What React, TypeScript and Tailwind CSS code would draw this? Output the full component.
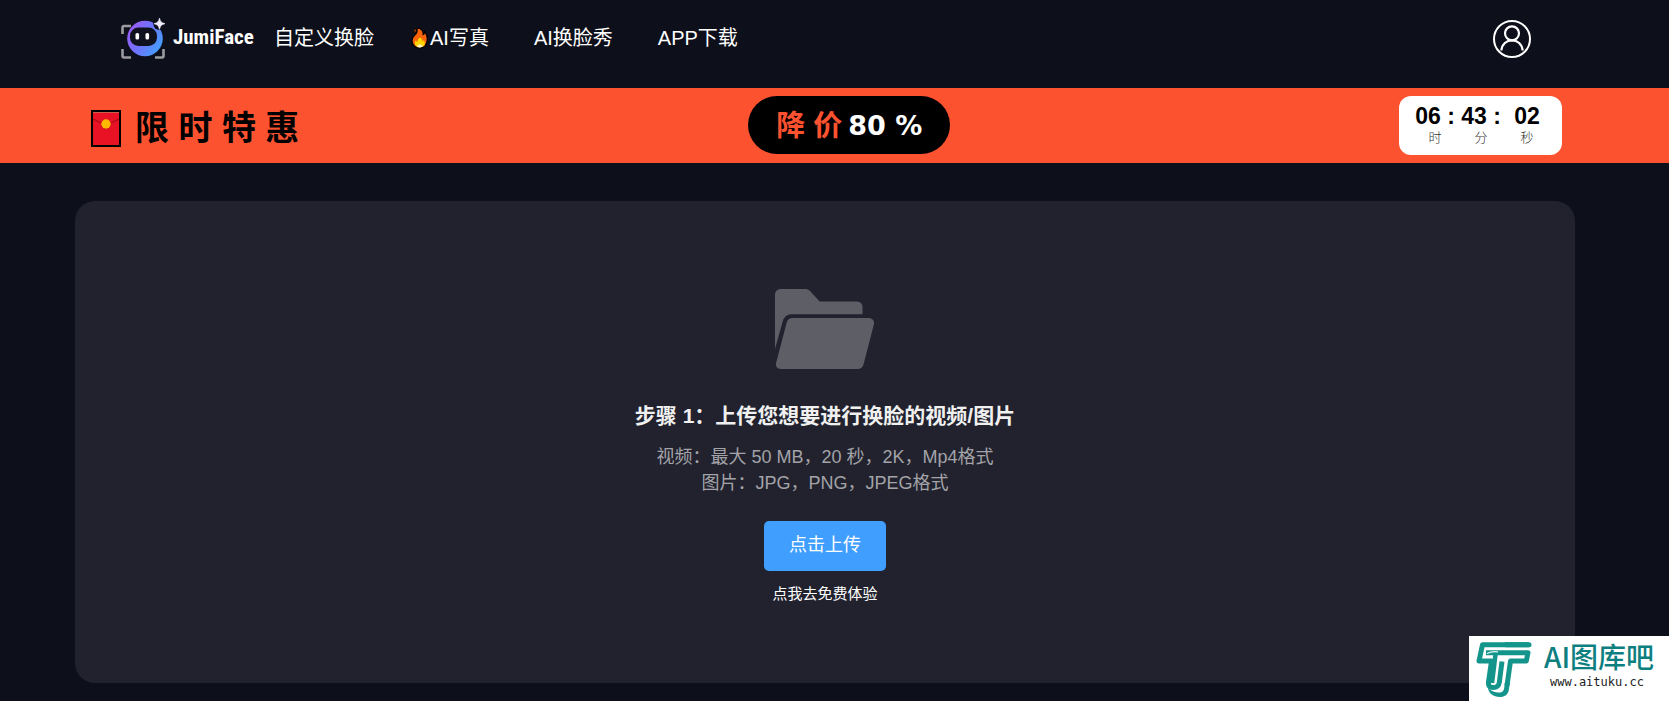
function LogoMark() {
  return (
    <svg width="44" height="42" viewBox="0 0 44 42" fill="none" aria-hidden="true">
      <defs>
        <linearGradient id="orb" x1="8" y1="10" x2="42" y2="30" gradientUnits="userSpaceOnUse">
          <stop offset="0" stopColor="#9a5cf6" />
          <stop offset="0.45" stopColor="#6f73fb" />
          <stop offset="1" stopColor="#3fa3fc" />
        </linearGradient>
      </defs>
      <path d="M1.500 16V9.500a1.500 1.500 0 0 1 1.500-1.500H10M1.500 31v7a1.500 1.500 0 0 0 1.500 1.500H10M34 39.500h7a1.500 1.500 0 0 0 1.500-1.500v-7" stroke="#9b9ba0" strokeWidth="2.600" />
      <circle cx="24" cy="20.500" r="17.800" fill="url(#orb)" />
      <circle cx="38.500" cy="5.800" r="6.200" fill="#0d0f1b" />
      <rect x="9" y="9.500" width="27" height="18.500" rx="8.500" fill="#10111f" />
      <rect x="14.500" y="15" width="3.600" height="6.500" rx="1.600" fill="#fff" />
      <rect x="24.500" y="15" width="3.600" height="6.500" rx="1.600" fill="#fff" />
      <path d="M38.500 0c.9 3.700 1.700 4.600 5.500 5.700-3.800 1.100-4.600 2-5.500 5.700-.9-3.700-1.700-4.600-5.500-5.700 3.800-1.100 4.600-2 5.500-5.700z" fill="#f1edff" stroke="#f1edff" strokeWidth=".6" />
    </svg>
  );
}

function Flame() {
  return (
    <svg width="20" height="22" viewBox="0 0 20 22" aria-hidden="true">
      <path
        d="M9.300 1.200c3.300 1.300 4 3.800 3.900 6.300 1-.6 1.400-1.600 1.300-2.900 2.200 2.600 3 5.700 2.700 8.800-.4 4.400-3.300 7.600-7.500 7.600-4.500 0-7.700-3-7.700-7.200 0-2.300.9-3.900 2.500-5.400C6.500 6.600 7.600 4.800 6.900 2.300 7.600 1.300 8.400 1 9.300 1.200z"
        fill="#f7630c"
        stroke="#000"
        strokeWidth="1.200"
      />
      <path d="M4.200 2.800 5.800 2l.3 2-1.700 1.800z" fill="#f7630c" stroke="#000" strokeWidth=".6" />
      <path d="M10.300 10.500c1.900 1.300 2.200 2.600 2 4 .7-.2 1-.7 1.200-1.400 1.300 1.400 1.700 3 1.200 4.500-.6 1.700-2.300 2.700-4.900 2.700-2.800 0-4.900-1.300-5-3.700 0-1.200.3-2.200.9-3 .4.8.9 1.200 1.700 1.300-.2-2 1-3.600 2.900-4.400z" fill="#ffd400" />
      <path d="m7.200 20 .5-2.600 1 1 1-1.700 1.300 1.700 1-.8.500 2.200c-1.500.8-3.800.8-5.300.2z" fill="#fff6c8" />
    </svg>
  );
}

function Envelope() {
  return (
    <svg width="30" height="37" viewBox="0 0 30 37" aria-hidden="true">
      <rect x="1" y="1" width="28" height="35" fill="#e81224" stroke="#000" strokeWidth="2" />
      <path d="M2 2.500h26" stroke="#d05a50" />
      <path d="M2 9l8 4M28 9l-8 4" stroke="#a80d1a" strokeWidth="1.200" />
      <path d="M10.500 15.500a4.800 4.800 0 0 0 9 0" stroke="#a80d1a" strokeWidth="1" fill="none" />
      <circle cx="15" cy="14" r="4.700" fill="#ffb900" />
    </svg>
  );
}

function UserIcon() {
  return (
    <svg width="38" height="38" viewBox="0 0 38 38" fill="none" stroke="#fff" aria-hidden="true">
      <circle cx="19" cy="19" r="18" strokeWidth="2" />
      <circle cx="19" cy="13.300" r="7" strokeWidth="2.200" />
      <path d="M8.300 30.500C9 24 13.500 20.300 19 20.300S29 24 29.700 30.500" strokeWidth="2.200" />
    </svg>
  );
}

function FolderIcon() {
  return (
    <svg width="100" height="80" viewBox="0 0 100 80" fill="#5e5e67" aria-hidden="true">
      <path d="M0 60V5.500A5.500 5.500 0 0 1 5.500 0H30c2 0 3.500.6 5 2l9.700 10.500H82a5.500 5.500 0 0 1 5.500 5.500v7.200H17c-5 0-8 2.500-9.300 7.300z" />
      <path d="M17.500 29h76c4 0 6.500 3 5.300 6.800L88.500 75.500c-.8 3-3 4.500-6 4.500H6c-3.700 0-5.800-2.800-4.800-6.500L11.700 33.500c.8-3 2.800-4.500 5.800-4.500z" />
    </svg>
  );
}

function WatermarkLogo() {
  return (
    <svg width="58" height="56" viewBox="0 0 58 56" fill="none" aria-hidden="true">
      <g stroke="#13958b" strokeWidth="5" strokeLinejoin="round">
        <path d="M53 2.700H6.500L3 19h12.500L12.500 40c-.5 4 1.500 5.500 4.500 5.500 3.500 0 5.800-1.500 6.300-5L26 19.500" />
        <path d="M53 2.700H30" strokeLinecap="round" />
        <path d="M10 10.800h42L50.300 19H34.500L31 43.500" />
        <path d="M19.500 12.500 16 41" strokeWidth="4.500" />
      </g>
      <path d="M28.700 41h5.200L32.800 48c-.8 4.700-4 7-9 7-6.500 0-11-3.500-12-9.500 3.500 4 7.500 5 11.500 5 3.200 0 4.500-1.500 5-5z" fill="#13958b" />
      <path d="M11 11.500c3.500-2 7-2.300 11-1.700" stroke="#e4f6f4" strokeWidth="1.200" />
    </svg>
  );
}

const countdown = [
  { value: "06 :", label: "时" },
  { value: "43 :", label: "分" },
  { value: "02", label: "秒" },
];

export default function App() {
  return (
    <div className="relative min-h-screen bg-[#0d0f1b] pb-[18px] font-['Liberation_Sans','Noto_Sans_CJK_SC',sans-serif] text-white">
      <header className="flex h-[88px] items-start justify-between pt-[18px] pr-[138px] pl-[121px]">
        <div className="flex items-start">
          <a href="#" className="flex gap-2">
            <LogoMark />
            <span className="w-[82px] pt-[5px] font-['Liberation_Sans_Narrow','Roboto_Condensed',Roboto,sans-serif] text-[21px] leading-7 font-bold whitespace-nowrap">
              JumiFace
            </span>
          </a>
          <nav className="ml-[19px] flex gap-9 pt-1.5 text-xl leading-7 whitespace-nowrap">
            <a href="#">自定义换脸</a>
            <a href="#" className="flex items-center">
              <Flame />
              AI写真
            </a>
            <a href="#" className="pl-[9px]">AI换脸秀</a>
            <a href="#" className="pl-[9px]">APP下载</a>
          </nav>
        </div>
        <button type="button" aria-label="账户" className="pt-0.5">
          <UserIcon />
        </button>
      </header>

      <section className="flex h-[75px] items-start justify-between bg-[#fd5230] pt-2 pr-[107px] pl-[91px]">
        <div className="flex items-center gap-3.5 pt-3 text-[34px] leading-10 font-bold whitespace-nowrap text-black">
          <Envelope />
          <span>限 时 特 惠</span>
        </div>
        <div className="flex h-[58px] items-center justify-center gap-1.5 rounded-full bg-black px-7 pt-0.5 font-bold whitespace-nowrap">
          <span className="text-[29px] leading-9 text-[#fd5230]">降 价</span>
          <span className="font-['DejaVu_Sans',sans-serif] text-[27px] leading-9">80 %</span>
        </div>
        <div className="grid grid-cols-[46px_46px_46px] rounded-xl bg-white pt-1.5 pr-3 pb-[9px] pl-[13px] text-center text-black">
          {countdown.map((part) => (
            <div key={part.label}>
              <div className="text-[23px] leading-7 font-bold whitespace-nowrap">{part.value}</div>
              <div className="text-[13px] leading-4 font-light text-[#333]">{part.label}</div>
            </div>
          ))}
        </div>
      </section>

      <main className="mt-[38px] mr-[94px] ml-[75px] flex flex-col items-center rounded-[20px] bg-[#21222e] pt-[88px] pb-[78px]">
        <FolderIcon />
        <h1 className="mt-[31px] text-[21px] leading-8 font-bold text-[#f0f0f0]">
          步骤 1：上传您想要进行换脸的视频/图片
        </h1>
        <p className="mt-3 text-center text-lg leading-[26px] text-[#a3a3a8]">
          视频：最大 50 MB，20 秒，2K，Mp4格式
          <br />
          图片：JPG，PNG，JPEG格式
        </p>
        <button type="button" className="mt-[25px] h-[50px] rounded-[5px] bg-[#409eff] px-[25px] pb-0.5 text-lg">
          点击上传
        </button>
        <a href="#" className="mt-3 text-[15px] leading-[22px]">点我去免费体验</a>
      </main>

      <aside className="absolute right-0 bottom-0 flex h-[65px] w-[200px] gap-2.5 bg-white pt-1.5 pl-[7px]">
        <WatermarkLogo />
        <div className="whitespace-nowrap">
          <div className="font-['Noto_Sans_CJK_SC',sans-serif] text-[28px] leading-7 font-medium text-[#0e7f80]">AI图库吧</div>
          <div className="pt-1 pl-1.5 font-['DejaVu_Sans_Mono',monospace] text-xs leading-4 text-[#222]">www.aituku.cc</div>
        </div>
      </aside>
    </div>
  );
}
